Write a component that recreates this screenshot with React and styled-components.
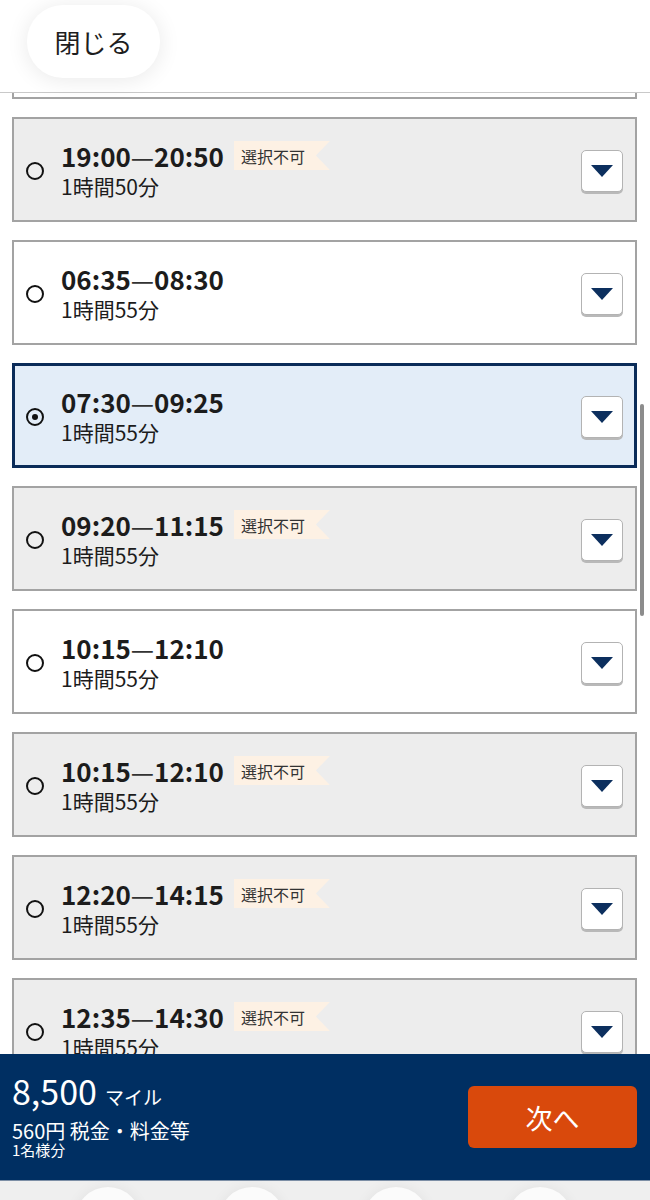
import styled, { createGlobalStyle } from "styled-components";

const GlobalStyle = createGlobalStyle`
  html, body {
    margin: 0;
    padding: 0;
    background: #ffffff;
  }
  body {
    font-family: "Noto Sans CJK JP", "Noto Sans", sans-serif;
    color: #1a1a1a;
  }
`;

const flights = [
  { dep: "18:05", arr: "19:55", duration: "1時間50分", state: "open" },
  { dep: "19:00", arr: "20:50", duration: "1時間50分", state: "closed" },
  { dep: "06:35", arr: "08:30", duration: "1時間55分", state: "open" },
  { dep: "07:30", arr: "09:25", duration: "1時間55分", state: "selected" },
  { dep: "09:20", arr: "11:15", duration: "1時間55分", state: "closed" },
  { dep: "10:15", arr: "12:10", duration: "1時間55分", state: "open" },
  { dep: "10:15", arr: "12:10", duration: "1時間55分", state: "closed" },
  { dep: "12:20", arr: "14:15", duration: "1時間55分", state: "closed" },
  { dep: "12:35", arr: "14:30", duration: "1時間55分", state: "closed" },
];

const App = () => {
  return (
    <>
      <GlobalStyle />
      <Page>
        <Header>
          <CloseButton type="button">閉じる</CloseButton>
        </Header>
        <ListViewport>
          <ListInner>
            {flights.map((f, i) => (
              <Card key={i} $state={f.state}>
                <Radio $checked={f.state === "selected"} />
                <Info>
                  <TimeRow>
                    <Time>
                      {f.dep}
                      <Dash>—</Dash>
                      {f.arr}
                    </Time>
                    {f.state === "closed" && <Badge>選択不可</Badge>}
                  </TimeRow>
                  <Duration>{f.duration}</Duration>
                </Info>
                <Toggle type="button" aria-label="詳細">
                  <svg width="22" height="12" viewBox="0 0 22 12">
                    <path d="M0 0 H22 L11 12 Z" fill="#0c2f5e" />
                  </svg>
                </Toggle>
              </Card>
            ))}
          </ListInner>
          <ScrollThumb />
        </ListViewport>
        <Footer>
          <Price>
            <Miles>
              8,500<MilesUnit>マイル</MilesUnit>
            </Miles>
            <Tax>560円 税金・料金等</Tax>
            <Per>1名様分</Per>
          </Price>
          <NextButton type="button">次へ</NextButton>
        </Footer>
        <TabStrip>
          <TabBubble />
          <TabBubble />
          <TabBubble />
          <TabBubble />
        </TabStrip>
      </Page>
    </>
  );
};

const Page = styled.div`
  width: 650px;
  height: 1200px;
  display: flex;
  flex-direction: column;
  overflow: hidden;
  background: #fff;
`;

const Header = styled.header`
  height: 93px;
  flex-shrink: 0;
  border-bottom: 1px solid #c9c9c9;
  display: flex;
  align-items: flex-start;
  padding: 5px 0 0 27px;
  box-sizing: border-box;
  background: #fff;
  position: relative;
  z-index: 1;
`;

const CloseButton = styled.button`
  width: 133px;
  height: 73px;
  border: none;
  border-radius: 36px;
  background: #fff;
  box-shadow: 0 2px 22px rgba(0, 0, 0, 0.09);
  font-family: inherit;
  font-size: 26px;
  color: #1e1e1e;
  padding: 0;
`;

const ListViewport = styled.div`
  flex: 1;
  overflow: hidden;
  position: relative;
`;

const ListInner = styled.div`
  margin-top: -99px;
  padding: 0 13px 0 12px;
  display: flex;
  flex-direction: column;
  gap: 18px;
`;

const cardColors = {
  open: { bg: "#ffffff", border: "2px solid #a3a3a3" },
  closed: { bg: "#ededed", border: "2px solid #a3a3a3" },
  selected: { bg: "#e3edf8", border: "3px solid #0b2c59" },
};

const Card = styled.div`
  height: 105px;
  box-sizing: border-box;
  background: ${(p) => cardColors[p.$state].bg};
  border: ${(p) => cardColors[p.$state].border};
  display: flex;
  align-items: center;
  padding-left: ${(p) => (p.$state === "selected" ? "11px" : "12px")};
  padding-right: ${(p) => (p.$state === "selected" ? "11px" : "12px")};
`;

const Radio = styled.span`
  width: 18px;
  height: 18px;
  box-sizing: border-box;
  border-radius: 50%;
  border: 2.5px solid #111;
  flex-shrink: 0;
  display: flex;
  align-items: center;
  justify-content: center;
  margin-top: 2px;

  &::after {
    content: "";
    display: ${(p) => (p.$checked ? "block" : "none")};
    width: 6px;
    height: 6px;
    border-radius: 50%;
    background: #111;
  }
`;

const Info = styled.div`
  display: flex;
  flex-direction: column;
  margin-left: 17px;
`;

const TimeRow = styled.div`
  display: flex;
  align-items: center;
  gap: 10px;
  height: 32px;
`;

const Time = styled.span`
  font-size: 26px;
  font-weight: 700;
  color: #1c1c1c;
`;

const Dash = styled.span`
  font-weight: 400;
  color: #333;
`;

const Badge = styled.span`
  width: 96px;
  height: 29px;
  box-sizing: border-box;
  padding-left: 7px;
  display: flex;
  align-items: center;
  background: #fdf1e4;
  font-size: 16px;
  color: #333;
  clip-path: polygon(0 0, 100% 0, calc(100% - 14px) 50%, 100% 100%, 0 100%);
`;

const Duration = styled.span`
  font-size: 21px;
  line-height: 28px;
  color: #1c1c1c;
`;

const Toggle = styled.button`
  margin-left: auto;
  width: 42px;
  height: 42px;
  padding: 0;
  border: 1px solid #b3b3b3;
  border-radius: 5px;
  background: #fff;
  box-shadow: 0 2px 0 #b9b9b9;
  display: flex;
  align-items: center;
  justify-content: center;
  margin-top: 2px;
`;

const ScrollThumb = styled.div`
  position: absolute;
  right: 6px;
  top: 311px;
  width: 4px;
  height: 212px;
  border-radius: 2px;
  background: #8c8c8c;
`;

const Footer = styled.footer`
  height: 126px;
  flex-shrink: 0;
  background: #002f62;
  display: flex;
  align-items: center;
  justify-content: space-between;
  padding: 0 13px 0 12px;
  box-sizing: border-box;
  color: #fff;
`;

const Price = styled.div`
  display: flex;
  flex-direction: column;
  margin-top: -6px;
`;

const Miles = styled.div`
  font-size: 34px;
  line-height: 40px;
`;

const MilesUnit = styled.span`
  font-size: 19px;
  margin-left: 8px;
`;

const Tax = styled.div`
  font-size: 20px;
  line-height: 22px;
  margin-top: 3px;
`;

const Per = styled.div`
  font-size: 15px;
  line-height: 15px;
`;

const NextButton = styled.button`
  width: 169px;
  height: 62px;
  border: none;
  border-radius: 6px;
  background: #d9490c;
  color: #fff;
  font-family: inherit;
  font-size: 27px;
  padding: 0;
`;

const TabStrip = styled.nav`
  height: 20px;
  flex-shrink: 0;
  background: #efefef;
  display: flex;
  padding-left: 75px;
  gap: 78px;
  overflow: hidden;
  border-top: 1px solid #7d8fa6;
  box-sizing: border-box;
`;

const TabBubble = styled.span`
  width: 66px;
  height: 66px;
  border-radius: 50%;
  background: #fbfbfb;
  box-shadow: 0 0 14px rgba(0, 0, 0, 0.06);
  margin-top: 6px;
  flex-shrink: 0;
`;

export default App;
